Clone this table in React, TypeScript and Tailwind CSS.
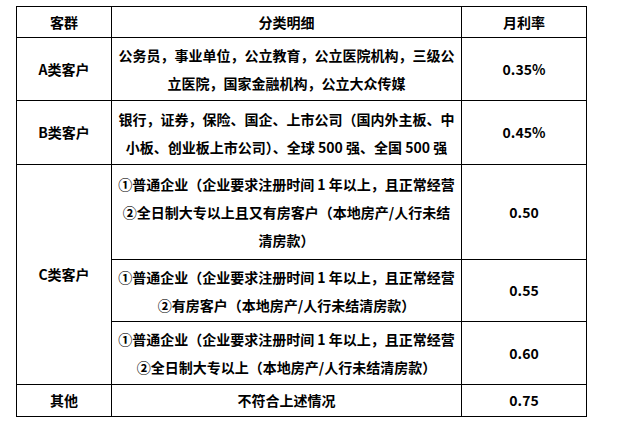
const rows = [
  { group: "A类客户", lines: ["公务员，事业单位，公立教育，公立医院机构，三级公", "立医院，国家金融机构，公立大众传媒"], rate: "0.35%", h: "h-[63px]" },
  { group: "B类客户", lines: ["银行，证券，保险、国企、上市公司（国内外主板、中", "小板、创业板上市公司）、全球 500 强、全国 500 强"], rate: "0.45%", h: "h-[64px]" },
];

const cRows = [
  {
    lines: ["①普通企业（企业要求注册时间 1 年以上，且正常经营", "②全日制大专以上且又有房客户（本地房产/人行未结", "清房款）"],
    rate: "0.50",
    h: "h-[95px]",
  },
  {
    lines: ["①普通企业（企业要求注册时间 1 年以上，且正常经营", "②有房客户（本地房产/人行未结清房款）"],
    rate: "0.55",
    h: "h-[62px]",
  },
  {
    lines: ["①普通企业（企业要求注册时间 1 年以上，且正常经营", "②全日制大专以上（本地房产/人行未结清房款）"],
    rate: "0.60",
    h: "h-[63px]",
  },
];

function Lines({ lines }: { lines: string[] }) {
  return (
    <>
      {lines.map((l, i) => (
        <div key={i} className="whitespace-nowrap leading-[28px]">
          {l}
        </div>
      ))}
    </>
  );
}

export default function App() {
  const cell = "border border-black text-center align-middle p-0";
  return (
    <div className="min-h-screen bg-white pl-4 pt-1.5 font-['Noto_Sans_CJK_SC',sans-serif] text-[14px] font-bold text-black">
      <table className="w-[570px] table-fixed border-collapse">
        <colgroup>
          <col className="w-[95px]" />
          <col className="w-[350px]" />
          <col className="w-[125px]" />
        </colgroup>
        <tbody>
          {/* header */}
          <tr className="h-[31px]">
            <td className={cell}>客群</td>
            <td className={cell}>分类明细</td>
            <td className={cell}>月利率</td>
          </tr>

          {rows.map((r) => (
            <tr key={r.group} className={r.h}>
              <td className={cell}>{r.group}</td>
              <td className={cell}>
                <Lines lines={r.lines} />
              </td>
              <td className={cell}>{r.rate}</td>
            </tr>
          ))}

          {cRows.map((r, i) => (
            <tr key={r.rate} className={r.h}>
              {i === 0 && (
                <td className={cell} rowSpan={3}>
                  C类客户
                </td>
              )}
              <td className={cell}>
                <Lines lines={r.lines} />
              </td>
              <td className={cell}>{r.rate}</td>
            </tr>
          ))}

          <tr className="h-[32px]">
            <td className={cell}>其他</td>
            <td className={cell}>不符合上述情况</td>
            <td className={cell}>0.75</td>
          </tr>
        </tbody>
      </table>
    </div>
  );
}
